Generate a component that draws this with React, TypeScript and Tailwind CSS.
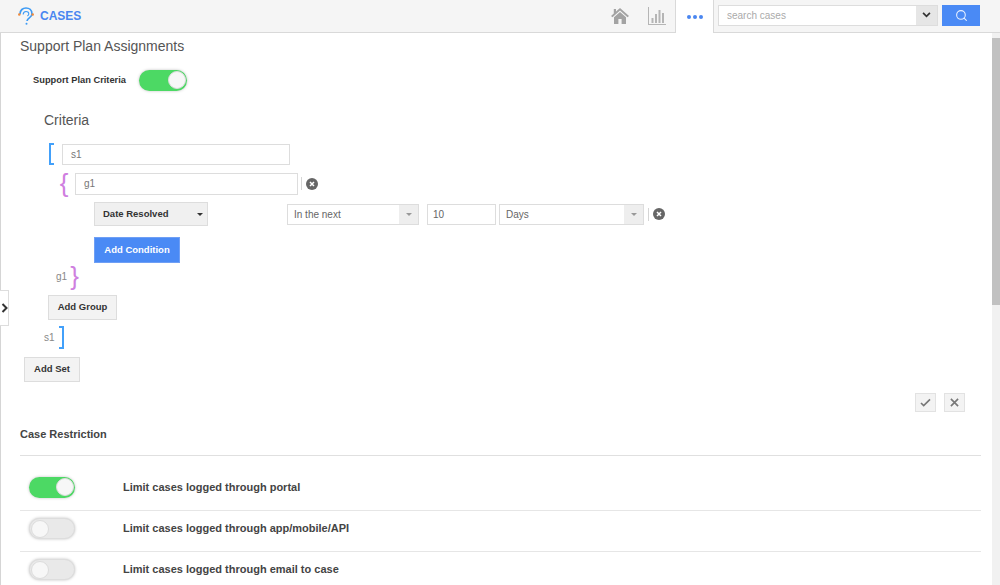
import React from 'react';
import { Search } from 'lucide-react';

const font = { fontFamily: '"Liberation Sans", Arial, sans-serif' };

function Toggle({ on, className = '' }: { on: boolean; className?: string }) {
  return (
    <div className={`relative h-[21px] rounded-full shadow-[0_0_3px_rgba(0,0,0,0.25)] ${on ? 'bg-[#4cd964]' : 'bg-[#e9e9e9] border border-[#dddddd]'} ${className}`}>
      <div className={`absolute top-[1px] h-[18px] w-[18px] rounded-full bg-[#f7f7f7] border border-[#dcdcdc] ${on ? 'right-[1px]' : 'left-[1px]'}`} />
    </div>
  );
}

function RemoveIcon({ className = '' }: { className?: string }) {
  return (
    <div className={`flex items-center ${className}`}>
      <div className="h-[13px] w-px bg-[#d5d5d5]" />
      <svg viewBox="0 0 12 12" className="ml-[4px] h-[12px] w-[12px]">
        <circle cx="6" cy="6" r="6" fill="#666666" />
        <path d="M4 4 L8 8 M8 4 L4 8" stroke="#ffffff" strokeWidth="1.5" />
      </svg>
    </div>
  );
}

function Caret({ className = '' }: { className?: string }) {
  return <div className={`h-0 w-0 border-x-[3px] border-t-[3px] border-x-transparent ${className}`} />;
}

function TextBox({ value, className = '' }: { value: string; className?: string }) {
  return (
    <div className={`flex items-center border border-[#dddddd] bg-white px-[8px] text-[10px] text-[#777777] ${className}`}>
      {value}
    </div>
  );
}

function ComboBox({ value, className = '' }: { value: string; className?: string }) {
  return (
    <div className={`flex items-stretch border border-[#dddddd] bg-white text-[10px] text-[#666666] ${className}`}>
      <div className="flex flex-1 items-center pl-[6px]">{value}</div>
      <div className="flex w-[19px] items-center justify-center bg-[#eeeeee]">
        <Caret className="border-t-[#999999]" />
      </div>
    </div>
  );
}

function GreyButton({ label, className = '' }: { label: string; className?: string }) {
  return (
    <div className={`flex items-center justify-center border border-[#dddddd] bg-[#f3f3f3] text-[9.5px] font-bold text-[#333333] ${className}`}>
      {label}
    </div>
  );
}

function RestrictionRow({ on, label, last }: { on: boolean; label: string; last?: boolean }) {
  return (
    <div className={`flex h-[41px] items-center pb-[6px] pl-[9px] ${last ? '' : 'border-b border-[#e6e6e6]'}`}>
      <Toggle on={on} className="w-[46px]" />
      <div className="ml-[48px] text-[11px] font-bold text-[#444444]">{label}</div>
    </div>
  );
}

export default function App() {
  return (
    <div className="relative flex h-[585px] w-[1000px] flex-col overflow-hidden bg-white" style={font}>
      {/* Top bar */}
      <div className="flex h-[33px] shrink-0 items-center border-b border-[#d9d9d9] bg-[#f5f5f5]">
        <svg viewBox="0 0 16 18" className="ml-[18px] h-[18px] w-[16px]" fill="none">
          <path d="M2 7 C2 -1 14 -1 14 7 C14 10.5 9.5 10.5 9 14" stroke="#3d9bf5" strokeWidth="1.7" />
          <path d="M5.2 7.5 C5.2 3.5 10.8 3.5 10.8 7 C10.8 8 10 8.6 9.4 9" stroke="#3d9bf5" strokeWidth="1.1" />
          <circle cx="1.3" cy="7.5" r="1.3" fill="#ee8a3c" />
          <circle cx="14.7" cy="7.5" r="1.3" fill="#ee8a3c" />
          <circle cx="8.5" cy="16.8" r="1" fill="#3d9bf5" />
        </svg>
        <div className="ml-[6px] text-[12px] font-bold text-[#4a86f0]">CASES</div>
        <div className="flex-1" />
        <svg viewBox="0 0 18 16" className="mr-[19px] h-[16px] w-[18px]" fill="#a3a3a3">
          <path d="M9 0 L18 8 L16.5 9.2 L9 2.6 L1.5 9.2 L0 8 L2.8 5.5 L2.8 1 L5 1 L5 3.5 Z" />
          <path d="M3 9.2 L9 4 L15 9.2 L15 16 L10.6 16 L10.6 11 L7.4 11 L7.4 16 L3 16 Z" />
        </svg>
        <svg viewBox="0 0 18 18" className="mr-[9px] h-[18px] w-[18px]" fill="#b5b5b5">
          <rect x="0" y="0" width="1" height="17" />
          <rect x="0" y="17" width="18" height="1" />
          <rect x="3.5" y="11" width="2" height="5" />
          <rect x="7" y="7" width="2" height="9" />
          <rect x="10.5" y="3" width="2" height="13" />
          <rect x="14" y="6" width="2" height="10" />
        </svg>
        <div className="flex h-[33px] w-[39px] items-center justify-center gap-[2px] border-x border-[#d9d9d9] bg-white pt-[1px]">
          <div className="h-[4px] w-[4px] rounded-full bg-[#4a86f0]" />
          <div className="h-[4px] w-[4px] rounded-full bg-[#4a86f0]" />
          <div className="h-[4px] w-[4px] rounded-full bg-[#4a86f0]" />
        </div>
        <div className="mb-[2px] ml-[4px] flex h-[21px] w-[220px] border border-[#dddddd] bg-white">
          <div className="flex flex-1 items-center pl-[8px] text-[10px] text-[#aaaaaa]">search cases</div>
          <div className="flex w-[21px] items-center justify-center bg-[#e6e6e6]">
            <svg viewBox="0 0 10 7" className="h-[6px] w-[9px]" fill="none">
              <path d="M1 1 L5 5 L9 1" stroke="#333333" strokeWidth="2" />
            </svg>
          </div>
        </div>
        <div className="mb-[2px] ml-[4px] mr-[20px] flex h-[21px] w-[38px] items-center justify-center bg-[#4a8af5]">
          <Search size={13} color="#e8f0ff" strokeWidth={2} />
        </div>
      </div>

      <div className="flex min-h-0 flex-1">
        {/* Main content */}
        <div className="min-w-0 flex-1 border-l-[1px] border-[#d5d5d5] pl-[19px]">
          <div className="mt-[5px] text-[14px] leading-[16px] text-[#555555]">Support Plan Assignments</div>

          <div className="ml-[13px] mt-[16px] flex items-center">
            <div className="text-[9.3px] font-bold text-[#333333]">Support Plan Criteria</div>
            <Toggle on className="ml-[13px] w-[48px]" />
          </div>

          <div className="ml-[24px] mt-[21px] text-[14px] leading-[16px] text-[#555555]">Criteria</div>

          {/* Set open */}
          <div className="ml-[29px] mt-[15px] flex items-center">
            <div className="h-[22px] w-[5px] border-y-2 border-l-2 border-[#42a0fa]" />
            <TextBox value="s1" className="ml-[8px] h-[21px] w-[228px]" />
          </div>

          {/* Group open */}
          <div className="ml-[40px] mt-[7px] flex items-center">
            <div className="flex w-[8px] justify-center text-[26px] leading-[23px] font-light text-[#cf7fe0]">{'{'}</div>
            <TextBox value="g1" className="ml-[7px] h-[22px] w-[223px]" />
            <RemoveIcon className="ml-[3px]" />
          </div>

          {/* Condition */}
          <div className="ml-[74px] mt-[7px] flex items-center">
            <div className="flex h-[24px] w-[114px] items-center justify-between border border-[#dddddd] bg-[#f0f0f0] pl-[8px] pr-[4px] text-[9.5px] font-bold text-[#333333]">
              Date Resolved
              <Caret className="border-t-[#333333]" />
            </div>
            <ComboBox value="In the next" className="ml-[79px] h-[21px] w-[132px]" />
            <TextBox value="10" className="ml-[8px] h-[21px] w-[69px] !px-[5px] !text-[#666666]" />
            <ComboBox value="Days" className="ml-[3px] h-[21px] w-[145px]" />
            <RemoveIcon className="ml-[4px]" />
          </div>

          <div className="ml-[74px] mt-[11px] flex h-[26px] w-[86px] items-center justify-center border border-[#6f9ff5] bg-[#4a8af5] text-[9.5px] font-bold text-white">
            Add Condition
          </div>

          {/* Group close */}
          <div className="ml-[36px] mt-[2px] flex h-[22px] items-center">
            <div className="text-[10px] text-[#888888]">g1</div>
            <div className="ml-[3px] text-[26px] leading-[23px] font-light text-[#cf7fe0]">{'}'}</div>
          </div>

          <GreyButton label="Add Group" className="ml-[28px] mt-[8px] h-[25px] w-[69px]" />

          {/* Set close */}
          <div className="ml-[24px] mt-[6px] flex h-[23px] items-center">
            <div className="text-[10px] text-[#888888]">s1</div>
            <div className="ml-[4px] h-[23px] w-[5px] border-y-2 border-r-2 border-[#42a0fa]" />
          </div>

          <GreyButton label="Add Set" className="ml-[4px] mt-[8px] h-[25px] w-[56px]" />

          {/* Save / cancel */}
          <div className="mr-[27px] mt-[11px] flex justify-end gap-[8px]">
            <div className="flex h-[19px] w-[21px] items-center justify-center border border-[#e2e2e2] bg-[#f3f3f3]">
              <svg viewBox="0 0 12 10" className="h-[9px] w-[11px]" fill="none">
                <path d="M1 5.5 L4 8.5 L11 1.5" stroke="#777777" strokeWidth="1.8" />
              </svg>
            </div>
            <div className="flex h-[19px] w-[21px] items-center justify-center border border-[#e2e2e2] bg-[#f3f3f3]">
              <svg viewBox="0 0 10 10" className="h-[9px] w-[9px]" fill="none">
                <path d="M1 1 L9 9 M9 1 L1 9" stroke="#777777" strokeWidth="1.8" />
              </svg>
            </div>
          </div>

          {/* Case restriction */}
          <div className="mr-[11px] mt-[16px]">
            <div className="text-[11px] font-bold leading-[13px] text-[#444444]">Case Restriction</div>
            <div className="mt-[14px] h-[1px] bg-[#e0e0e0]" />
            <div className="mt-[14px]">
              <RestrictionRow on label="Limit cases logged through portal" />
              <RestrictionRow on={false} label="Limit cases logged through app/mobile/API" />
              <RestrictionRow on={false} label="Limit cases logged through email to case" last />
            </div>
          </div>
        </div>

        {/* Scrollbar */}
        <div className="flex w-[8px] shrink-0 flex-col bg-[#f1f1f1]">
          <div className="mt-[5px] h-[267px] bg-[#c1c1c1]" />
        </div>
      </div>

      {/* Side panel toggle */}
      <div className="absolute left-0 top-[290px] flex h-[36px] w-[9px] items-center justify-center border border-l-0 border-[#dddddd] bg-white">
        <svg viewBox="0 0 7 10" className="h-[10px] w-[7px]" fill="none">
          <path d="M1.5 1 L5.5 5 L1.5 9" stroke="#333333" strokeWidth="2" />
        </svg>
      </div>
    </div>
  );
}
